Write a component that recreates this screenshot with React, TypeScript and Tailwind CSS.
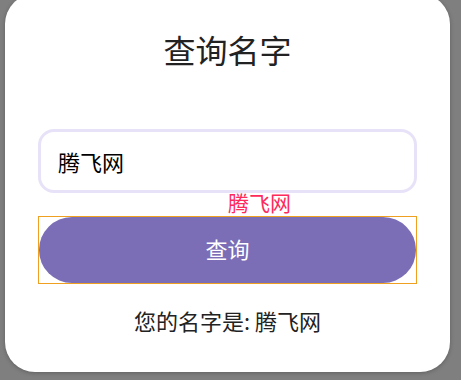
import React from "react";

export default function App() {
  return (
    <div
      className="w-[461px] h-[380px] overflow-hidden bg-[#7f7f7f]"
      style={{ fontFamily: '"Noto Sans CJK SC", "Noto Sans", sans-serif' }}
    >
      <div className="ml-[5px] mt-[-6px] w-[445px] h-[378px] rounded-[30px] bg-white shadow-[0_1px_4px_rgba(0,0,0,0.25)] flex flex-col">
        <div className="mt-[30px] h-[50px] flex items-center justify-center text-[32px] leading-none text-[#222]">
          查询名字
        </div>
        <div className="mt-[55px] mx-[33px] h-[64px] rounded-[16px] border-[3px] border-[#e8e2f8] flex items-center pl-[17px] text-[22px] text-black">
          腾飞网
        </div>
        <div className="h-[23px] pl-[223px] text-[21px] leading-[19px] text-[#ff2a5c]">
          腾飞网
        </div>
        <div className="mx-[33px] h-[68px] border border-[#f0a020]">
          <div className="h-full rounded-full bg-[#7b6db6] flex items-center justify-center pb-[3px] text-[22px] text-white">
            查询
          </div>
        </div>
        <div className="mt-[21px] text-center text-[22px] leading-[30px] text-[#222]">
          您的名字是: 腾飞网
        </div>
      </div>
    </div>
  );
}
